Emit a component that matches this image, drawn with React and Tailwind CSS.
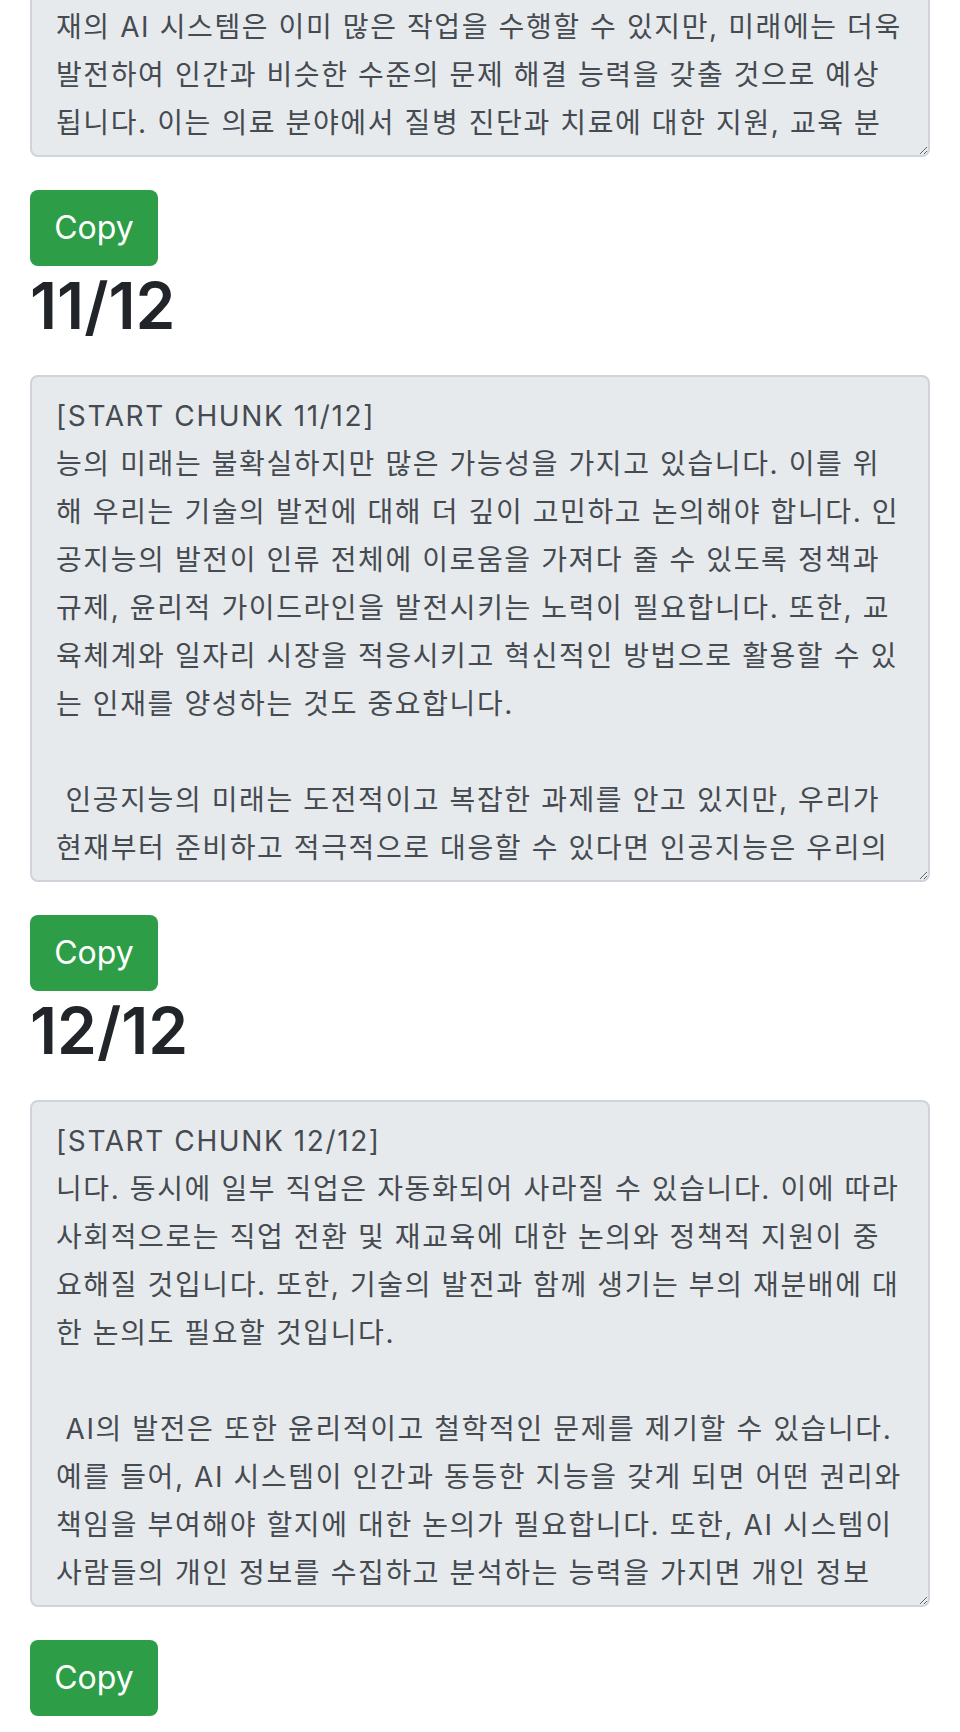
import React from 'react';

const chunks = [
  {
    id: 10,
    lines: [
      '[START CHUNK 10/12]',
      '인공지능 기술은 지난 수십 년 동안 눈부신 속도로 발전해 왔습니다. 초',
      '기의 규칙 기반 시스템에서 시작하여 오늘날에는 방대한 데이터를 학',
      '습하는 딥러닝 모델이 다양한 분야에서 활용되고 있습니다. 이러한 변',
      '화는 우리의 일상생활과 산업 전반에 큰 영향을 미치고 있습니다.',
      '',
      ' 앞으로 인공지능은 더욱 정교해지고 다양한 영역으로 확장될 것입니다. 현',
      '재의 AI 시스템은 이미 많은 작업을 수행할 수 있지만, 미래에는 더욱',
      '발전하여 인간과 비슷한 수준의 문제 해결 능력을 갖출 것으로 예상',
      '됩니다. 이는 의료 분야에서 질병 진단과 치료에 대한 지원, 교육 분',
      '야에서 개인화된 학습 지원 등 다양한 분야에서 활용될 것으로 보입',
      '니다.',
    ],
  },
  {
    id: 11,
    lines: [
      '[START CHUNK 11/12]',
      '능의 미래는 불확실하지만 많은 가능성을 가지고 있습니다. 이를 위',
      '해 우리는 기술의 발전에 대해 더 깊이 고민하고 논의해야 합니다. 인',
      '공지능의 발전이 인류 전체에 이로움을 가져다 줄 수 있도록 정책과',
      '규제, 윤리적 가이드라인을 발전시키는 노력이 필요합니다. 또한, 교',
      '육체계와 일자리 시장을 적응시키고 혁신적인 방법으로 활용할 수 있',
      '는 인재를 양성하는 것도 중요합니다.',
      '',
      ' 인공지능의 미래는 도전적이고 복잡한 과제를 안고 있지만, 우리가',
      '현재부터 준비하고 적극적으로 대응할 수 있다면 인공지능은 우리의',
      '삶을 더욱 풍요롭게 만드는 데 큰 도움이 될 것입니다.',
    ],
  },
  {
    id: 12,
    lines: [
      '[START CHUNK 12/12]',
      '니다. 동시에 일부 직업은 자동화되어 사라질 수 있습니다. 이에 따라',
      '사회적으로는 직업 전환 및 재교육에 대한 논의와 정책적 지원이 중',
      '요해질 것입니다. 또한, 기술의 발전과 함께 생기는 부의 재분배에 대',
      '한 논의도 필요할 것입니다.',
      '',
      ' AI의 발전은 또한 윤리적이고 철학적인 문제를 제기할 수 있습니다.',
      '예를 들어, AI 시스템이 인간과 동등한 지능을 갖게 되면 어떤 권리와',
      '책임을 부여해야 할지에 대한 논의가 필요합니다. 또한, AI 시스템이',
      '사람들의 개인 정보를 수집하고 분석하는 능력을 가지면 개인 정보',
      '보호와 관련된 문제가 발생할 수 있습니다. 이러한 문제들에 대해서도',
    ],
  },
];

const Chunk = ({ id, lines, total }) => {
  const text = lines.join('\n');

  return (
    <div>
      <h2 className="text-[64px] font-semibold leading-[1.2] text-[#212529]">
        {id}/{total}
      </h2>
      <textarea
        readOnly
        wrap="off"
        value={text}
        className="mt-[30px] block h-[507px] w-full resize-y overflow-hidden whitespace-pre rounded-[8px] border-2 border-[#ced4da] bg-[#e7eaed] px-[24px] pt-[15px] pb-[9px] text-[28px] leading-[48px] tracking-[1.6px] text-[#454b51] outline-none"
      />
      <button
        onClick={() => navigator.clipboard?.writeText(text)}
        className="mt-[33px] mb-[2px] block h-[76px] w-[128px] rounded-[8px] bg-[#2d9e47] text-[32px] leading-[48px] text-white"
      >
        Copy
      </button>
    </div>
  );
};

export default function App() {
  return (
    <div className="-mt-[456.8px] bg-white px-[30px] pb-[14px] font-['Inter','Noto_Sans_CJK_KR',sans-serif]">
      {chunks.map((chunk) => (
        <Chunk key={chunk.id} id={chunk.id} lines={chunk.lines} total={12} />
      ))}
    </div>
  );
}
